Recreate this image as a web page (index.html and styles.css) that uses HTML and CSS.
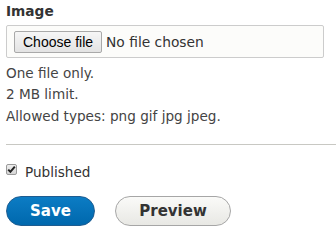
FILE: index.html
```html
<!DOCTYPE html>
<html>
<head>
<meta charset="utf-8">
<link rel="stylesheet" href="styles.css">
</head>
<body>
<form class="form">
  <div class="field">
    <div class="label">Image</div>
    <div class="file-box">
      <span class="file-btn">Choose file</span>
      <span class="file-name">No file chosen</span>
    </div>
    <div class="desc">
      <div class="desc-line">One file only.</div>
      <div class="desc-line">2 MB limit.</div>
      <div class="desc-line">Allowed types: png gif jpg jpeg.</div>
    </div>
  </div>
  <hr class="rule">
  <label class="check">
    <span class="box"><svg width="9" height="9" viewBox="0 0 9 9"><path d="M1.2 4.6 L3.4 6.8 L7.8 1.6" fill="none" stroke="#222" stroke-width="2"/></svg></span>
    <span class="check-text">Published</span>
  </label>
  <div class="actions">
    <span class="btn btn-primary">Save</span>
    <span class="btn btn-secondary">Preview</span>
  </div>
</form>
</body>
</html>
```
FILE: styles.css
```css
html, body {
  margin: 0;
  padding: 0;
  background: #fff;
}
body {
  font-family: "DejaVu Sans", sans-serif;
  color: #333;
}
.form {
  padding: 3px 0 0 6px;
}
.label {
  font-weight: bold;
  font-size: 13.7px;
  line-height: 16px;
  margin-bottom: 6px;
}
.file-box {
  height: 31px;
  border: 1px solid #ccc;
  border-radius: 2px;
  background: #fcfcfa;
  display: flex;
  align-items: center;
  padding-left: 7px;
  box-sizing: content-box;
  width: 309px;
}
.file-btn {
  font-family: "Liberation Sans", Arial, sans-serif;
  font-size: 14px;
  color: #000;
  height: 20px;
  line-height: 20px;
  padding: 0 8px 0 8px;
  border: 1px solid #a9a9a9;
  border-radius: 2px;
  background: linear-gradient(#f6f6f6, #e3e3e3);
}
.file-name {
  font-size: 13.8px;
  margin-left: 4px;
  color: #333;
}
.desc {
  margin-top: 4.5px;
  font-size: 13.6px;
  color: #444;
}
.desc-line {
  line-height: 21.5px;
}
.rule {
  border: 0;
  border-top: 1px solid #c8c8c3;
  margin: 17px 0 0 0;
  height: 0;
}
.check {
  display: flex;
  align-items: flex-start;
  margin-top: 19px;
}
.box {
  width: 9px;
  height: 9px;
  border: 1px solid #9a9a9a;
  border-radius: 2px;
  background: linear-gradient(#eee, #d6d6d6);
  display: flex;
  align-items: center;
  justify-content: center;
}
.check-text {
  font-size: 13.6px;
  line-height: 16px;
  padding-top: 0;
  margin-left: 8px;
}
.actions {
  display: flex;
  gap: 20px;
  margin-top: 16px;
}
.btn {
  height: 28px;
  line-height: 28px;
  border-radius: 15px;
  font-weight: bold;
  font-size: 15px;
  text-align: center;
  box-sizing: content-box;
}
.btn-primary {
  width: 87px;
  background: linear-gradient(#0c7cc4, #0068ad);
  border: 1px solid #1e5c90;
  color: #fff;
}
.btn-secondary {
  width: 114px;
  background: linear-gradient(#fafaf8, #e8e8e4);
  border: 1px solid #a6a6a6;
  color: #333;
}
```
